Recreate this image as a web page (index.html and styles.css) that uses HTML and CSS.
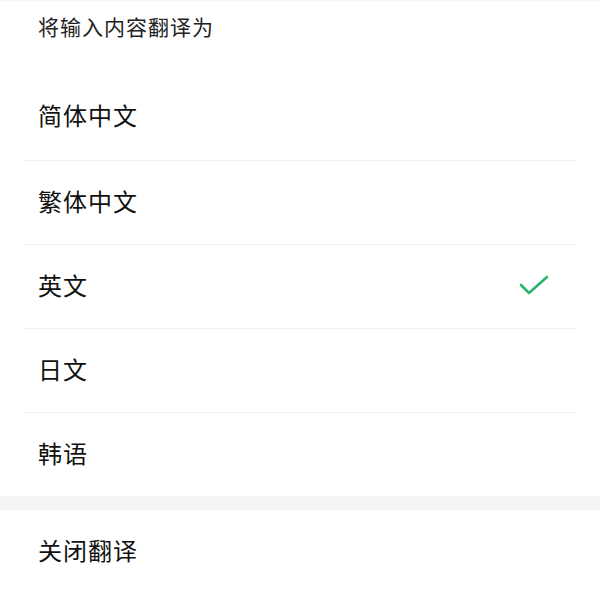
FILE: index.html
```html
<!DOCTYPE html>
<html lang="zh-CN">
<head>
    <meta charset="UTF-8">
    <meta name="viewport" content="width=device-width, initial-scale=1.0">
    <title>翻译</title>
    <link rel="stylesheet" href="styles.css">
</head>
<body>
    <div class="sheet">
        <div class="sheet-title">将输入内容翻译为</div>

        <ul class="lang-list">
            <li class="lang-item">简体中文</li>
            <li class="lang-item">繁体中文</li>
            <li class="lang-item selected">
                <span>英文</span>
                <svg class="check" width="32" height="24" viewBox="0 0 32 24">
                    <path d="M3 10 L11 18 L29 2" fill="none" stroke="#2bb46e" stroke-width="2.6" stroke-linecap="round" stroke-linejoin="round"/>
                </svg>
            </li>
            <li class="lang-item">日文</li>
            <li class="lang-item">韩语</li>
        </ul>

        <div class="gap"></div>

        <div class="lang-item close">关闭翻译</div>
    </div>
</body>
</html>
```

FILE: styles.css
```css
* {
    margin: 0;
    padding: 0;
    box-sizing: border-box;
}

body {
    font-family: 'Noto Sans CJK SC', sans-serif;
    background: #fff;
    color: #111;
}

.sheet {
    width: 600px;
    height: 594px;
    background: #fff;
}

.sheet-title {
    height: 76px;
    padding: 11px 0 0 38px;
    font-size: 21px;
    line-height: 28px;
    letter-spacing: 1px;
    border-top: 1px solid #f6f6f6;
    color: #222;
}

.lang-list {
    list-style: none;
    padding: 0 24px;
}

.lang-item {
    height: 84px;
    display: flex;
    align-items: center;
    justify-content: space-between;
    padding: 0 26px 5px 14px;
    font-size: 24px;
    letter-spacing: 1px;
    color: #111;
}

.lang-list .lang-item + .lang-item {
    border-top: 1px solid #f0f0f0;
}

.lang-list .lang-item:first-child {
    padding-bottom: 7px;
}

.check {
    display: block;
    margin-top: 5px;
}

.gap {
    height: 14px;
    background: #f5f5f5;
}

.close {
    padding-left: 38px;
    padding-bottom: 6px;
}
```
